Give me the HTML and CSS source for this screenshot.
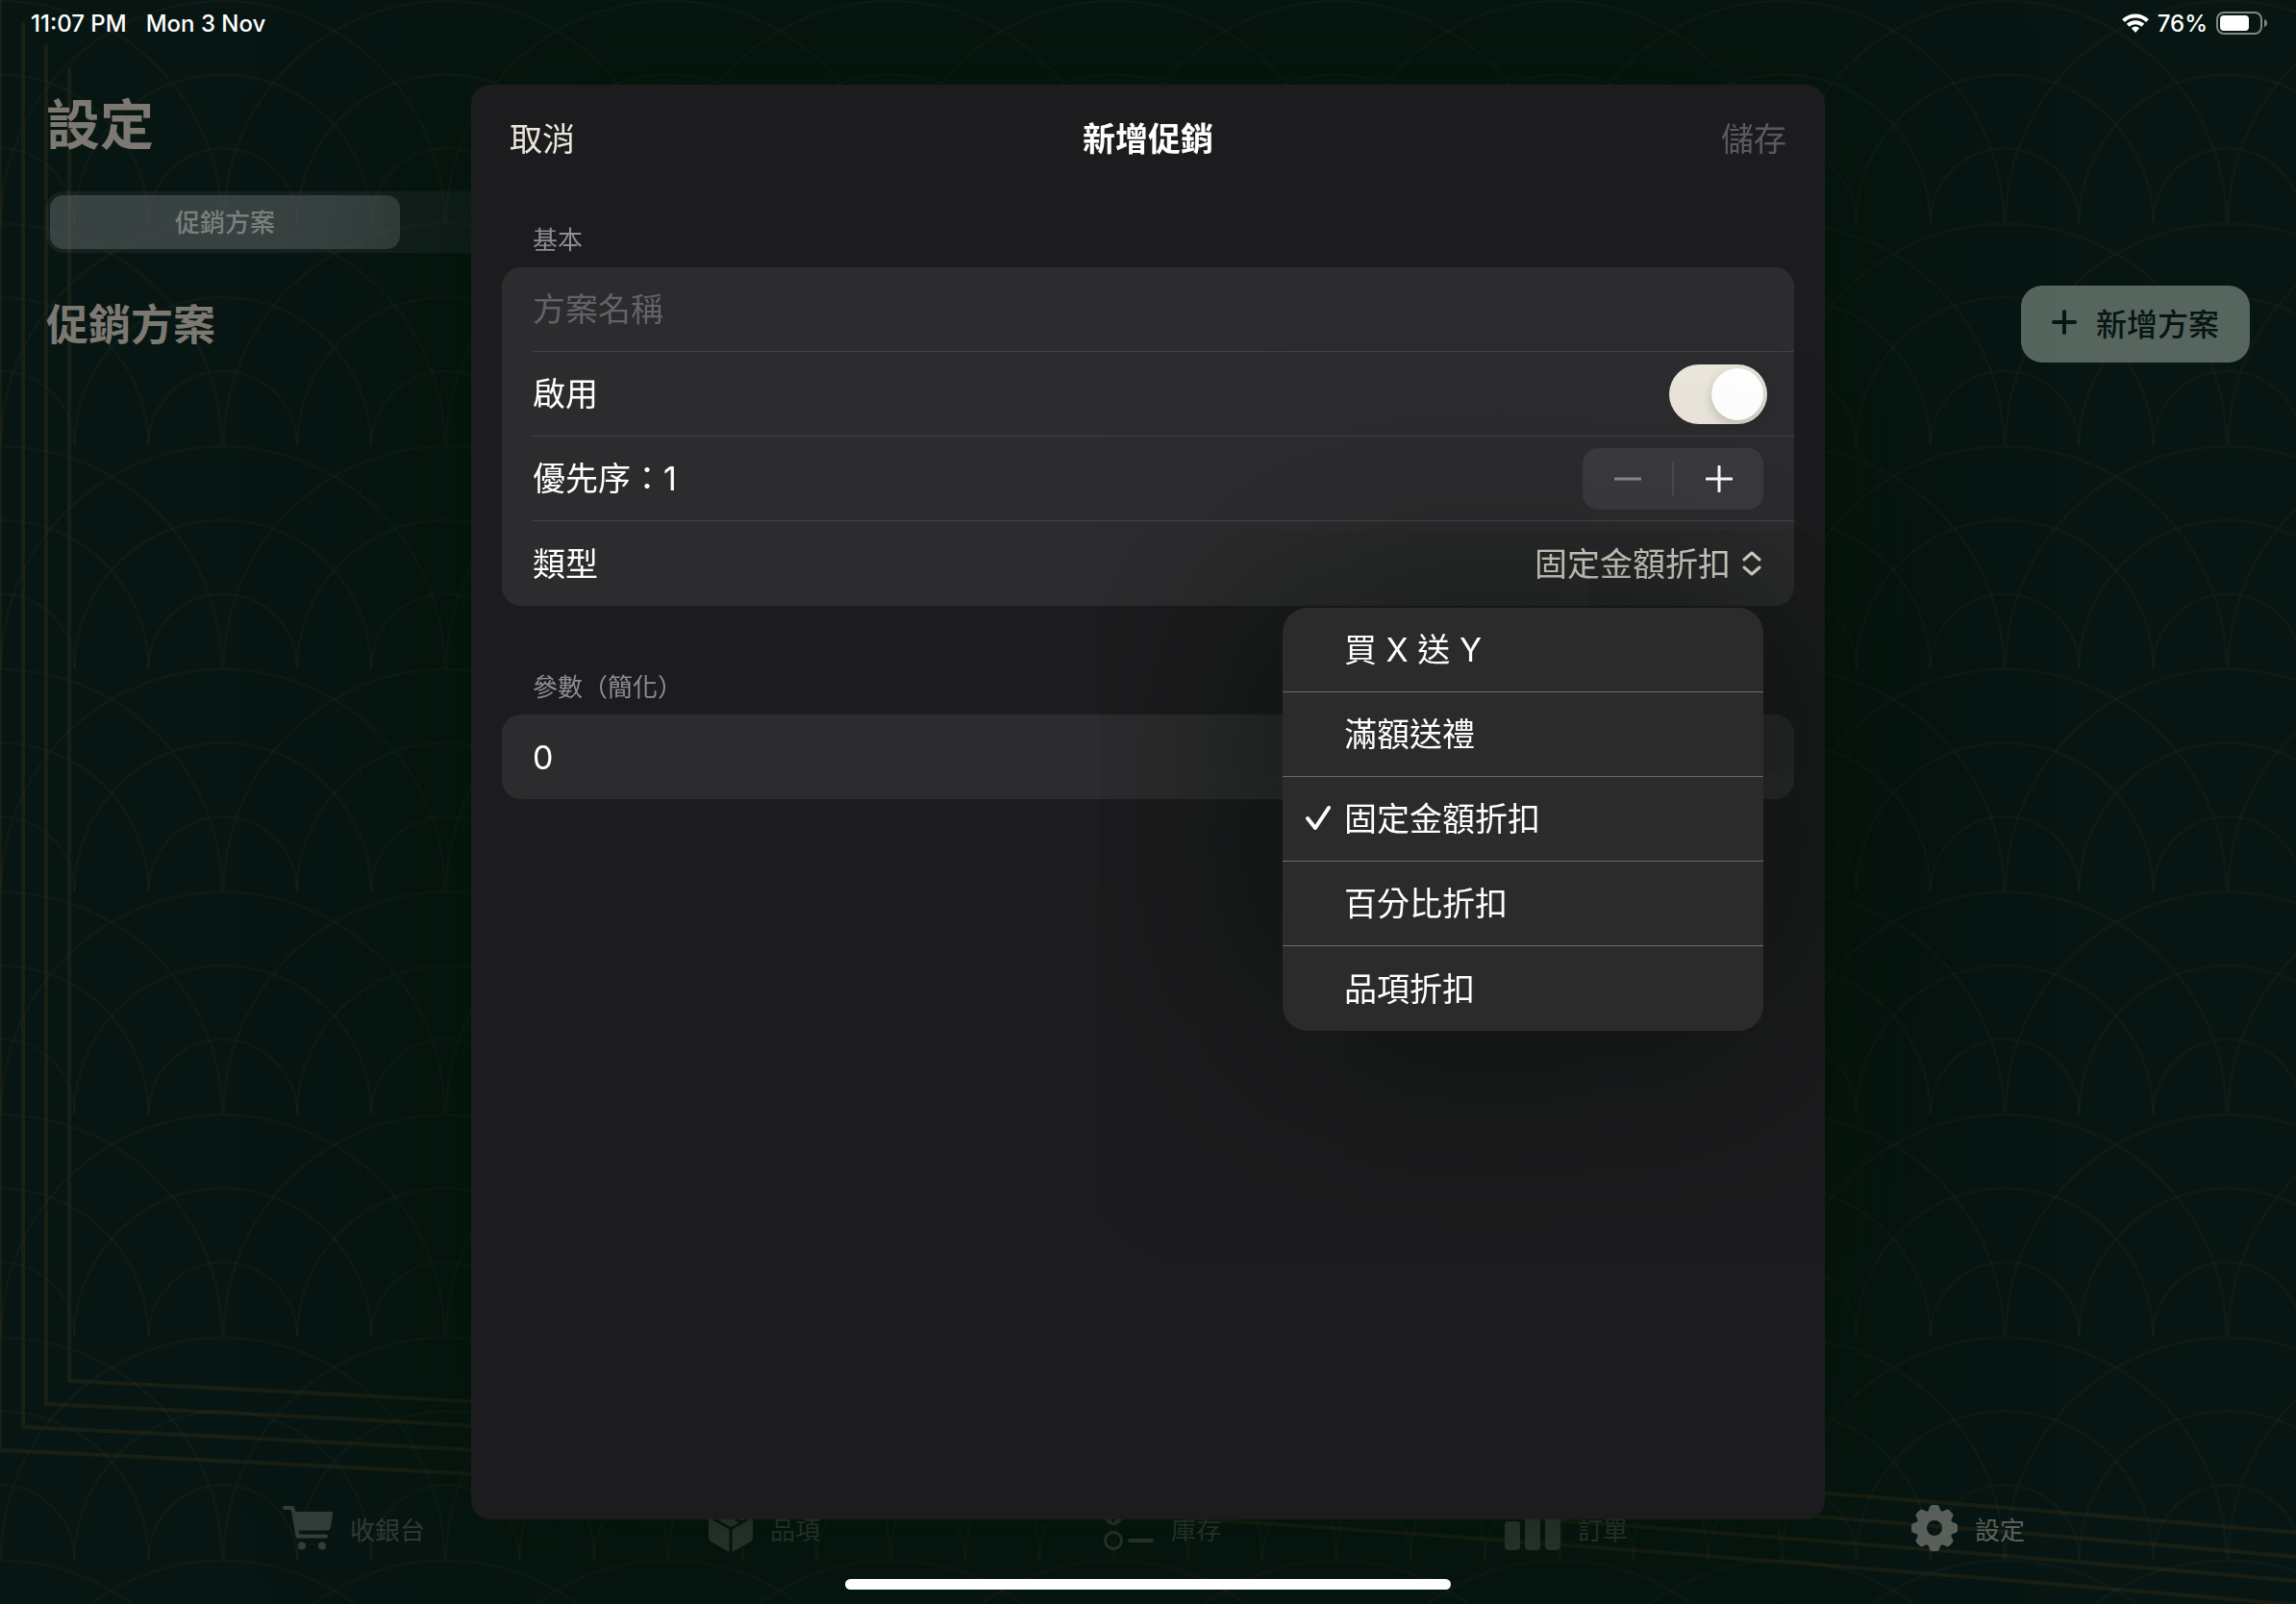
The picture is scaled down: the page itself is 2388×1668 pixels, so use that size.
FILE: index.html
```html
<!DOCTYPE html>
<html lang="zh-Hant">
  <head>
    <meta charset="UTF-8" />
    <meta name="viewport" content="width=device-width, initial-scale=1.0" />
    <title>新增促銷</title>
    <link rel="stylesheet" href="styles.css">
  </head>
  <body>
    <!-- Wave pattern and gold frame lines -->
    <svg class="backdrop" viewBox="0 0 2388 1668" preserveAspectRatio="none" aria-hidden="true">
      <defs>
        <pattern id="waves" width="695" height="695" patternUnits="userSpaceOnUse" patternTransform="scale(0.33333)">
          <g fill="none" stroke="#4a3a2c" stroke-opacity="0.13" stroke-width="6">
            <path d="M0 463A232 232 0 0 1 232 695M0 232A463 463 0 0 1 463 695M0 3A692 692 0 0 1 692 695" />
            <path d="M695 463A232 232 0 0 0 463 695M695 232A463 463 0 0 0 232 695M695 3A692 692 0 0 0 3 695" />
          </g>
        </pattern>
      </defs>
      <rect width="2388" height="1668" fill="url(#waves)" />
      <g class="frame-lines">
        <path d="M0 0V1508Q1194 1563 2388 1669" />
        <path d="M24 24V1484Q1206 1539 2400 1645" />
        <path d="M48 48V1460Q1218 1515 2412 1621" />
        <path d="M72 72V1436Q1230 1491 2424 1597" />
      </g>
    </svg>

    <div class="page">
      <div class="status-bar">
        <div class="status-group status-time">
          <span>11:07 PM</span>
          <span>Mon 3 Nov</span>
        </div>
        <div class="status-group">
          <svg width="28" height="20" viewBox="0 0 28 20" aria-hidden="true">
            <g fill="none" stroke="#fff" stroke-width="4">
              <path d="M1.500 7.500A18 18 0 0 1 26.500 7.500" />
              <path d="M6.200 12.300A11.500 11.500 0 0 1 21.800 12.300" />
            </g>
            <path d="M9.800 15.200a6.500 6.500 0 0 1 8.400 0L14 20z" fill="#fff" />
          </svg>
          <span>76%</span>
          <svg width="54" height="24" viewBox="0 0 54 24" aria-hidden="true">
            <rect x="1" y="1" width="46" height="22" rx="7" fill="none" stroke="#7f8683" stroke-width="2" />
            <rect x="4" y="4" width="30" height="16" rx="4" fill="#fff" />
            <path d="M50 8q3 1 3 4t-3 4z" fill="#7f8683" />
          </svg>
        </div>
      </div>

      <main class="settings">
        <h1>設定</h1>
        <div class="segmented">
          <button class="segment" type="button">促銷方案</button>
        </div>
        <div class="section-head">
          <h2>促銷方案</h2>
          <button class="add-button" type="button">
            <svg width="26" height="26" viewBox="0 0 26 26" aria-hidden="true">
              <path d="M13 2v22M2 13h22" stroke="currentColor" stroke-width="4" stroke-linecap="round" />
            </svg>
            新增方案
          </button>
        </div>
      </main>

      <nav class="tab-bar">
        <a class="tab" href="#">
          <svg width="52" height="46" viewBox="0 0 52 46" aria-hidden="true">
            <path d="M2 2h8.500l5 29.500h29.500" fill="none" stroke="currentColor" stroke-width="4" stroke-linecap="round" stroke-linejoin="round" />
            <path d="M12 6h38q2.500 0 2 3l-2 13q-.6 3.500-4 3.500H15z" fill="currentColor" />
            <circle cx="20" cy="41.500" r="4" fill="currentColor" />
            <circle cx="41" cy="41.500" r="4" fill="currentColor" />
          </svg>
          收銀台
        </a>
        <a class="tab" href="#">
          <svg width="46" height="50" viewBox="0 0 46 50" aria-hidden="true">
            <path d="M0 14l21.500 12.500V50L3 39.500Q0 38 0 34zM46 14L24.500 26.500V50L43 39.500Q46 38 46 34zM1.500 11.500L10 6.500l22 13L23 24zM13 5l8-4q2-1 4 0l19.500 10.500L35 17.500z" fill="currentColor" />
          </svg>
          品項
        </a>
        <a class="tab" href="#">
          <svg width="52" height="50" viewBox="0 0 52 50" aria-hidden="true">
            <circle cx="10" cy="12" r="10" fill="currentColor" />
            <path d="M6 12l4 6 4-8" fill="none" stroke="#03150b" stroke-width="2" />
            <circle cx="10" cy="38" r="8.500" fill="none" stroke="currentColor" stroke-width="3" />
            <path d="M27 12h23M27 38h23" stroke="currentColor" stroke-width="4" stroke-linecap="round" />
          </svg>
          庫存
        </a>
        <a class="tab" href="#">
          <svg width="58" height="46" viewBox="0 0 58 46" aria-hidden="true">
            <g fill="currentColor">
              <rect y="16" width="16" height="30" rx="4" />
              <rect x="21" y="6" width="16" height="40" rx="4" />
              <rect x="42" width="16" height="46" rx="4" />
            </g>
          </svg>
          訂單
        </a>
        <a class="tab tab-active" href="#">
          <svg width="48" height="48" viewBox="-24 -24 48 48" aria-hidden="true">
            <defs>
              <path id="tooth" d="M-7.500-15l2.500-7q.7-2 2.500-2h5q1.800 0 2.500 2l2.500 7z" />
            </defs>
            <circle r="13.500" fill="none" stroke="currentColor" stroke-width="11" />
            <g fill="currentColor">
              <use href="#tooth" />
              <use href="#tooth" transform="rotate(45)" />
              <use href="#tooth" transform="rotate(90)" />
              <use href="#tooth" transform="rotate(135)" />
              <use href="#tooth" transform="rotate(180)" />
              <use href="#tooth" transform="rotate(225)" />
              <use href="#tooth" transform="rotate(270)" />
              <use href="#tooth" transform="rotate(315)" />
            </g>
          </svg>
          設定
        </a>
      </nav>
    </div>

    <div class="overlay">
      <form class="sheet" role="dialog" aria-labelledby="sheet-title">
        <header class="sheet-header">
          <button class="cancel" type="button">取消</button>
          <h2 id="sheet-title">新增促銷</h2>
          <button class="save" type="submit" disabled>儲存</button>
        </header>

        <section class="group">
          <h3>基本</h3>
          <div class="card">
            <div class="row">
              <input class="text-field" type="text" placeholder="方案名稱" aria-label="方案名稱" />
            </div>
            <div class="row row-switch">
              <label for="enabled">啟用</label>
              <input class="switch" type="checkbox" id="enabled" checked />
            </div>
            <div class="row">
              <span>優先序：1</span>
              <div class="stepper">
                <button type="button" aria-label="減少" disabled>
                  <svg width="28" height="28" viewBox="0 0 28 28">
                    <path d="M1 14h26" stroke="currentColor" stroke-width="3" stroke-linecap="round" />
                  </svg>
                </button>
                <button type="button" aria-label="增加">
                  <svg width="28" height="28" viewBox="0 0 28 28">
                    <path d="M1 14h26M14 1v26" stroke="currentColor" stroke-width="3" stroke-linecap="round" />
                  </svg>
                </button>
              </div>
            </div>
            <div class="row">
              <label for="type">類型</label>
              <div class="picker">
                <select id="type">
                  <option>固定金額折扣</option>
                </select>
                <svg width="20" height="26" viewBox="0 0 20 26" aria-hidden="true">
                  <path d="M2 9l8-7 8 7M2 17l8 7 8-7" fill="none" stroke="currentColor" stroke-width="3" stroke-linecap="round" stroke-linejoin="round" />
                </svg>
              </div>
              <div class="menu" role="menu">
                <button type="button" role="menuitemradio">買 X 送 Y</button>
                <button type="button" role="menuitemradio">滿額送禮</button>
                <button type="button" role="menuitemradio" aria-checked="true">
                  <svg class="check" width="26" height="26" viewBox="0 0 26 26" aria-hidden="true">
                    <path d="M2 14l8 10L24 3" fill="none" stroke="currentColor" stroke-width="4" stroke-linecap="round" stroke-linejoin="round" />
                  </svg>
                  固定金額折扣
                </button>
                <button type="button" role="menuitemradio">百分比折扣</button>
                <button type="button" role="menuitemradio">品項折扣</button>
              </div>
            </div>
          </div>
        </section>

        <section class="group">
          <h3>參數（簡化）</h3>
          <div class="card">
            <div class="row">
              <input class="text-field" type="text" value="0" aria-label="折扣金額" />
            </div>
          </div>
        </section>
      </form>
    </div>

    <div class="home-indicator"></div>
  </body>
</html>
```
FILE: styles.css
```css
:root {
  --bg: #071612;
  --sheet: #1c1c1e;
  --card: #2c2c2e;
  --separator: #434345;
  --cream: #ebe7dc;
  --muted: #8d8d93;
  --dim-title: #7c7872;
}

* {
  margin: 0;
  padding: 0;
  box-sizing: border-box;
}

body {
  min-height: 100vh;
  background-color: var(--bg);
  color: #ffffff;
  font-family: Inter, "Noto Sans CJK TC", sans-serif;
  font-size: 34px;
  overflow: hidden;
}

button,
input,
select {
  font: inherit;
  color: inherit;
  background: none;
  border: none;
  outline: none;
}

svg {
  flex-shrink: 0;
}

.backdrop {
  position: absolute;
  inset: 0;
  width: 100%;
  height: 100%;
}

.frame-lines {
  fill: none;
  stroke: #4a3a18;
  stroke-opacity: 0.28;
  stroke-width: 4;
  stroke-linecap: round;
}

.page {
  position: relative;
  min-height: 100vh;
  display: flex;
  flex-direction: column;
}

/* Status bar */
.status-bar {
  display: flex;
  justify-content: space-between;
  align-items: center;
  height: 48px;
  padding: 0 29px 0 32px;
  font-size: 24px;
  font-weight: 500;
}

.status-group {
  display: flex;
  align-items: center;
  gap: 9px;
}

.status-time {
  gap: 20px;
}

/* Settings page */
.settings {
  flex: 1;
  padding: 42px 48px 0;
}

h1 {
  font-size: 56px;
  line-height: 80px;
  color: var(--dim-title);
}

.segmented {
  width: 1146px;
  max-width: 100%;
  margin-top: 29px;
  padding: 4px;
  border-radius: 18px;
  background-color: rgba(118, 118, 128, 0.12);
}

.segment {
  display: block;
  width: 364px;
  height: 56px;
  padding-bottom: 4px;
  border-radius: 14px;
  background-color: rgba(120, 124, 128, 0.36);
  color: #7c7f7e;
  font-size: 26px;
  font-weight: 500;
}

.section-head {
  display: flex;
  justify-content: space-between;
  align-items: center;
  margin-top: 34px;
}

.section-head h2 {
  padding-bottom: 4px;
  font-size: 44px;
  font-weight: 700;
  color: var(--dim-title);
}

.add-button {
  display: flex;
  align-items: center;
  gap: 20px;
  height: 80px;
  padding: 0 32px 4px;
  border-radius: 22px;
  background-color: #56655e;
  color: var(--bg);
  font-size: 32px;
  font-weight: 500;
}

/* Tab bar */
.tab-bar {
  display: flex;
  justify-content: space-between;
  align-items: center;
  height: 64px;
  margin-bottom: 46px;
  padding: 0 282px 0 294px;
}

.tab {
  display: flex;
  align-items: center;
  gap: 18px;
  padding-bottom: 2px;
  color: #323e39;
  font-size: 26px;
  text-decoration: none;
}

.tab-active {
  color: #5d635f;
}

/* Sheet */
.overlay {
  position: fixed;
  inset: 88px 0;
  display: flex;
  justify-content: center;
}

.sheet {
  width: 100%;
  max-width: 1408px;
  padding: 0 32px;
  border-radius: 20px;
  background-color: var(--sheet);
  box-shadow: 0 0 200px rgba(0, 20, 4, 0.75);
}

.sheet-header {
  display: flex;
  justify-content: space-between;
  align-items: center;
  height: 112px;
  padding: 0 8px 4px;
}

.sheet-header h2 {
  font-size: 34px;
  font-weight: 700;
}

.cancel {
  color: var(--cream);
}

.save {
  color: #5a5a5e;
}

.group {
  padding-top: 30px;
}

.group + .group {
  padding-top: 65px;
}

.group h3 {
  padding: 0 32px;
  margin-bottom: 8px;
  font-size: 26px;
  line-height: 40px;
  font-weight: 400;
  color: var(--muted);
}

.card {
  border-radius: 20px;
  background-color: var(--card);
}

.row {
  position: relative;
  display: flex;
  justify-content: space-between;
  align-items: center;
  height: 88px;
  margin-left: 32px;
  padding-right: 32px;
}

.row:not(:last-child) {
  border-bottom: 1px solid var(--separator);
}

.row-switch {
  padding-right: 28px;
}

.row span,
.row label {
  padding-bottom: 4px;
}

.text-field {
  width: 100%;
}

.text-field::placeholder {
  color: #636366;
  opacity: 1;
}

.switch {
  appearance: none;
  width: 102px;
  height: 62px;
  padding: 4px;
  border-radius: 31px;
  background-color: #39393d;
}

.switch::before {
  content: "";
  display: block;
  width: 54px;
  height: 54px;
  border-radius: 50%;
  background-color: #ffffff;
  box-shadow: 0 4px 12px rgba(0, 0, 0, 0.2);
}

.switch:checked {
  background-color: var(--cream);
}

.switch:checked::before {
  margin-left: auto;
}

.stepper {
  display: flex;
  align-items: center;
  width: 188px;
  height: 64px;
  border-radius: 16px;
  background-color: #3a3a3f;
}

.stepper button {
  display: flex;
  flex: 1;
  justify-content: center;
  align-items: center;
  height: 36px;
}

.stepper button:disabled {
  color: #8c8c8e;
}

.stepper button + button {
  border-left: 2px solid #4b4b4f;
}

.picker {
  display: flex;
  align-items: center;
  gap: 12px;
  padding-right: 2px;
  color: var(--cream);
}

.picker select {
  appearance: none;
}

/* Drop-down menu */
.menu {
  position: absolute;
  top: calc(100% + 2px);
  right: 32px;
  z-index: 1;
  width: 500px;
  border-radius: 26px;
  background-color: #2b2b2b;
  box-shadow: 0 0 240px rgba(0, 8, 0, 0.8);
}

.menu button {
  display: flex;
  align-items: center;
  position: relative;
  width: 100%;
  height: 88px;
  padding: 0 0 4px 64px;
}

.menu button:not(:last-child) {
  border-bottom: 1px solid #6a6a6a;
}

.check {
  position: absolute;
  left: 24px;
}

.home-indicator {
  position: fixed;
  bottom: 15px;
  left: 50%;
  width: 630px;
  height: 11px;
  border-radius: 6px;
  background-color: #ffffff;
  transform: translateX(-50%);
}
```
